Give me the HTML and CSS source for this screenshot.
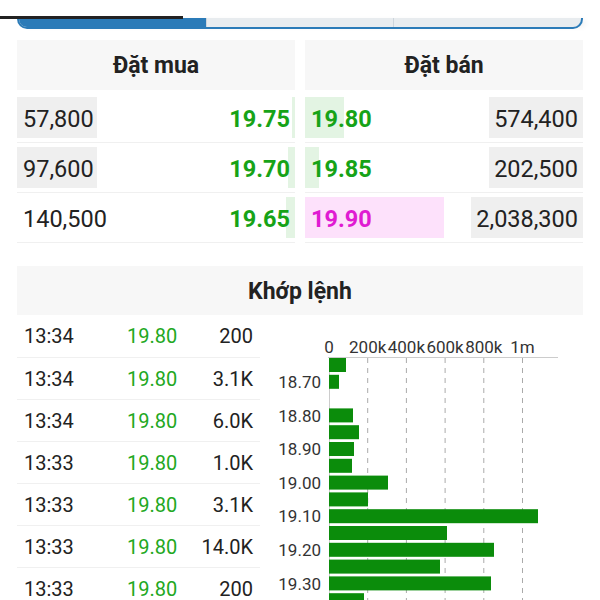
FILE: index.html
```html
<!DOCTYPE html>
<html lang="vi">
<head>
    <meta charset="UTF-8">
    <meta name="viewport" content="width=device-width, initial-scale=1.0">
    <link rel="stylesheet" href="styles.css">
    <title>Sổ lệnh</title>
</head>
<body>
  <div class="loading"></div>
  <div class="tabs">
    <div class="tab active"></div>
    <div class="tab"></div>
    <div class="tab"></div>
  </div>

  <div class="book">
    <div class="side">
      <div class="side-head">Đặt mua</div>
      <div class="level">
        <span class="depth vol-left" style="width:80px"></span>
        <span class="depth bid" style="width:3px"></span>
        <span class="qty">57,800</span>
        <span class="px up">19.75</span>
      </div>
      <div class="level">
        <span class="depth vol-left" style="width:80px"></span>
        <span class="depth bid" style="width:7px"></span>
        <span class="qty">97,600</span>
        <span class="px up">19.70</span>
      </div>
      <div class="level">
        <span class="depth bid" style="width:9px"></span>
        <span class="qty">140,500</span>
        <span class="px up">19.65</span>
      </div>
    </div>
    <div class="side sell">
      <div class="side-head">Đặt bán</div>
      <div class="level">
        <span class="depth ask" style="width:39px"></span>
        <span class="depth vol-right" style="width:94px"></span>
        <span class="px up">19.80</span>
        <span class="qty">574,400</span>
      </div>
      <div class="level">
        <span class="depth ask" style="width:14px"></span>
        <span class="depth vol-right" style="width:94px"></span>
        <span class="px up">19.85</span>
        <span class="qty">202,500</span>
      </div>
      <div class="level">
        <span class="depth ask ceil" style="width:139px"></span>
        <span class="depth vol-right" style="width:112px"></span>
        <span class="px ceil">19.90</span>
        <span class="qty">2,038,300</span>
      </div>
    </div>
  </div>

  <div class="matched">
    <div class="matched-head">Khớp lệnh</div>
    <div class="matched-body">
      <div class="tape">
        <div class="trade"><span>13:34</span><span class="up">19.80</span><span class="vol">200</span></div>
        <div class="trade"><span>13:34</span><span class="up">19.80</span><span class="vol">3.1K</span></div>
        <div class="trade"><span>13:34</span><span class="up">19.80</span><span class="vol">6.0K</span></div>
        <div class="trade"><span>13:33</span><span class="up">19.80</span><span class="vol">1.0K</span></div>
        <div class="trade"><span>13:33</span><span class="up">19.80</span><span class="vol">3.1K</span></div>
        <div class="trade"><span>13:33</span><span class="up">19.80</span><span class="vol">14.0K</span></div>
        <div class="trade"><span>13:33</span><span class="up">19.80</span><span class="vol">200</span></div>
      </div>
      <svg class="chart" width="323" height="290" viewBox="0 0 323 290">
        <g class="axis-labels">
          <text x="69" y="38">0</text>
          <text x="107.7" y="38">200k</text>
          <text x="146.4" y="38">400k</text>
          <text x="185.1" y="38">600k</text>
          <text x="223.8" y="38">800k</text>
          <text x="262.5" y="38">1m</text>
        </g>
        <line class="axis" x1="68" y1="42.5" x2="298" y2="42.5"/>
        <line class="axis" x1="69.5" y1="42" x2="69.5" y2="290"/>
        <g class="grid">
          <line x1="107.7" y1="43" x2="107.7" y2="290"/>
          <line x1="146.4" y1="43" x2="146.4" y2="290"/>
          <line x1="185.1" y1="43" x2="185.1" y2="290"/>
          <line x1="223.8" y1="43" x2="223.8" y2="290"/>
          <line x1="262.5" y1="43" x2="262.5" y2="290"/>
        </g>
        <g class="bars">
          <rect x="69" y="43" width="17" height="14"/>
          <rect x="69" y="59.8" width="10" height="14"/>
          <rect x="69" y="93.4" width="24" height="14"/>
          <rect x="69" y="110.2" width="30" height="14"/>
          <rect x="69" y="127" width="25" height="14"/>
          <rect x="69" y="143.8" width="23" height="14"/>
          <rect x="69" y="160.6" width="59" height="14"/>
          <rect x="69" y="177.4" width="39" height="14"/>
          <rect x="69" y="194.2" width="209" height="14"/>
          <rect x="69" y="211" width="118" height="14"/>
          <rect x="69" y="227.8" width="165" height="14"/>
          <rect x="69" y="244.6" width="111" height="14"/>
          <rect x="69" y="261.4" width="162" height="14"/>
          <rect x="69" y="278.2" width="35" height="14"/>
        </g>
        <g class="price-labels">
          <text x="61" y="73">18.70</text>
          <text x="61" y="106.6">18.80</text>
          <text x="61" y="140.2">18.90</text>
          <text x="61" y="173.8">19.00</text>
          <text x="61" y="207.4">19.10</text>
          <text x="61" y="241">19.20</text>
          <text x="61" y="274.6">19.30</text>
        </g>
      </svg>
    </div>
  </div>
</body>
</html>
```

FILE: styles.css
```css
body {
  margin: 0;
  font-family: Roboto, "Noto Sans", Arial, sans-serif;
  color: #222;
  background: #fff;
}

/* top tab strip, mostly scrolled away */
.loading {
  position: absolute;
  top: 16px;
  left: 0;
  width: 183px;
  height: 3px;
  background-color: #222;
}

.tabs {
  display: flex;
  height: 9px;
  margin: 18px 17px 0;
  border: 2px solid #2b7bb8;
  border-top: none;
  border-radius: 0 0 10px 10px;
  background-color: #e8ecef;
  overflow: hidden;
  box-shadow: 6px 0 6px -4px rgba(0, 0, 0, 0.15);
}

.tab {
  flex: 1;
}

.tab + .tab {
  border-left: 1px solid #cdd5dc;
}

.tab.active {
  background-color: #2b7bb8;
}

/* order book */
.book {
  display: grid;
  grid-template-columns: 1fr 1fr;
  gap: 10px;
  margin: 11px 17px 0;
}

.side-head {
  height: 50px;
  line-height: 52px;
  margin-bottom: 3px;
  text-align: center;
  font-size: 23px;
  font-weight: bold;
  background-color: #f7f7f7;
}

.level {
  position: relative;
  display: flex;
  justify-content: space-between;
  align-items: center;
  height: 49px;
  padding: 2px 5px 0 6px;
  box-sizing: border-box;
  height: 50px;
  border-bottom: 1px solid #f0f0f0;
  font-size: 23.5px;
}

.level span {
  position: relative;
}

.level .depth {
  position: absolute;
  top: 4px;
  bottom: 4px;
}

.vol-left {
  left: 0;
  background-color: #efefef;
}

.vol-right {
  right: 0;
  background-color: #efefef;
}

.bid {
  right: 0;
  background-color: #e3f4e3;
}

.ask {
  left: 0;
  background-color: #e3f4e3;
}

.ask.ceil {
  background-color: #fde1fb;
}

.px {
  font-weight: bold;
}

.up {
  color: #17a317;
}

.ceil {
  color: #e01bd2;
}

/* matched orders */
.matched {
  margin: 23px 17px 0;
}

.matched-head {
  height: 49px;
  line-height: 52px;
  text-align: center;
  font-size: 23px;
  font-weight: bold;
  background-color: #f7f7f7;
}

.matched-body {
  display: flex;
}

.tape {
  width: 243px;
  flex: none;
}

.trade {
  display: grid;
  grid-template-columns: 103px 1fr auto;
  align-items: center;
  height: 41px;
  padding: 0 7px;
  border-bottom: 1px solid #f0f0f0;
  font-size: 20px;
}

.trade:first-child {
  height: 42px;
}

.trade .up {
  color: #22a822;
}

.chart {
  display: block;
  flex: none;
  overflow: visible;
}

.chart text {
  font-family: Roboto, "Noto Sans", Arial, sans-serif;
  font-size: 17px;
  fill: #333;
}

.axis-labels text {
  text-anchor: middle;
}

.price-labels text {
  text-anchor: end;
}

.axis {
  stroke: #ccc;
  stroke-width: 1;
}

.grid line {
  stroke: #aaa;
  stroke-width: 1;
  stroke-dasharray: 5 5;
}

.bars rect {
  fill: #0b8c0b;
}
```
